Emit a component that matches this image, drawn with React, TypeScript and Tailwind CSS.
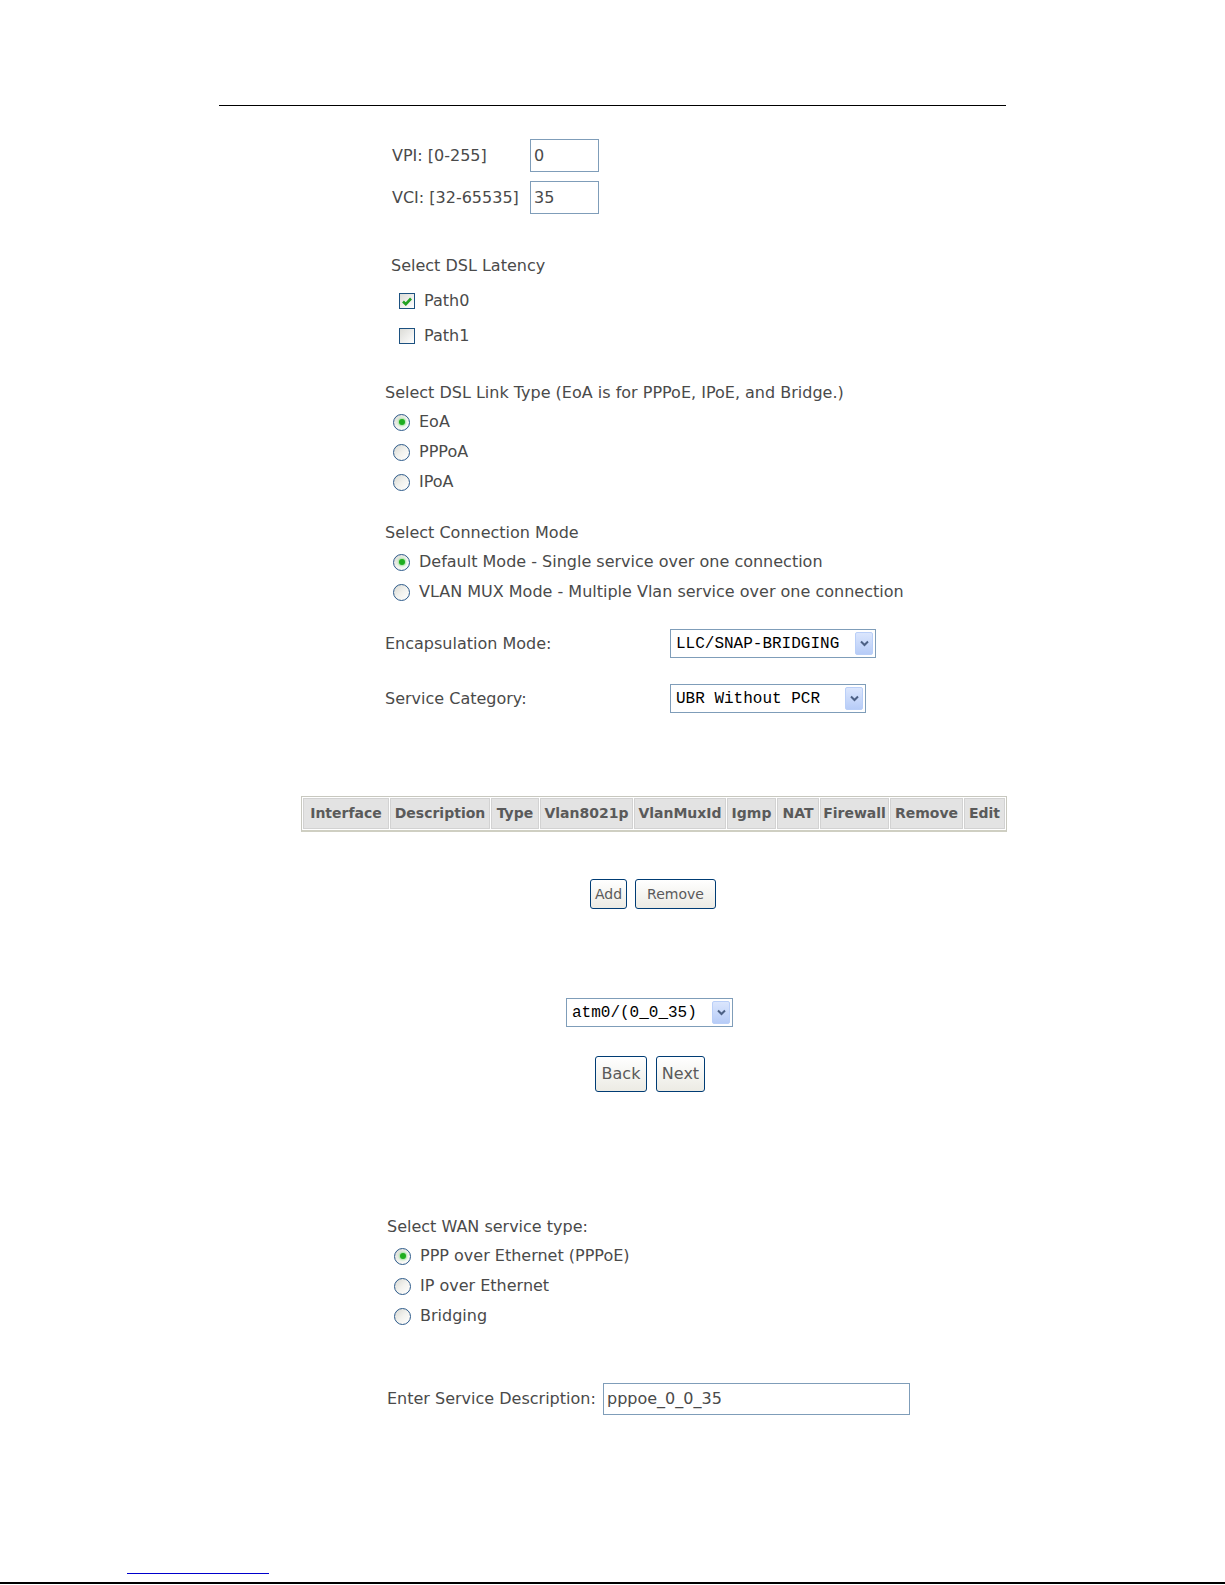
import React from "react";

const font = "font-['DejaVu_Sans',Verdana,sans-serif]";

function Radio({ checked }: { checked?: boolean }) {
  return (
    <span className="w-[17px] h-[17px] shrink-0 rounded-full border-[1.5px] border-[#2c5a8a] bg-linear-to-br from-[#d8d8d2] via-[#f2f2ee] to-white flex items-center justify-center">
      {checked && <span className="w-[6px] h-[6px] rounded-full bg-[#1fae1f] shadow-[0_0_2px_1px_#9ee39e]" />}
    </span>
  );
}

function Checkbox({ checked }: { checked?: boolean }) {
  return (
    <span className="w-[16px] h-[16px] shrink-0 border border-[#1c5180] bg-linear-to-br from-[#dcdcd7] to-white flex items-center justify-center">
      {checked && (
        <svg width="10" height="9" viewBox="0 0 10 9">
          <path d="M1 4.5 L3.8 7.2 L9 1.5" fill="none" stroke="#21a121" strokeWidth="2.6" />
        </svg>
      )}
    </span>
  );
}

function Select({ value, width }: { value: string; width: string }) {
  return (
    <div className={`${width} h-[29px] border border-[#7f9db9] bg-white flex items-center justify-between pl-[5px] pr-[2px]`}>
      <span className="font-['Liberation_Mono',monospace] text-[16px] text-black whitespace-pre">{value}</span>
      <span className="w-[18px] h-[23px] rounded-[2px] border border-[#bacff8] bg-linear-to-b from-[#dbe6fd] to-[#b7ccf7] flex items-center justify-center">
        <svg width="9" height="7" viewBox="0 0 9 7">
          <path d="M1 1.5 L4.5 5 L8 1.5" fill="none" stroke="#4d6185" strokeWidth="2" />
        </svg>
      </span>
    </div>
  );
}

function Button({ label, className }: { label: string; className: string }) {
  return (
    <span className={`${className} border border-[#003c74] rounded-[3px] bg-linear-to-b from-white to-[#ecebe4] text-[#5a5a5a] flex items-center justify-center`}>
      {label}
    </span>
  );
}

function Option({ checked, label, top }: { checked?: boolean; label: string; top: string }) {
  return (
    <div className={`${top} h-[20px] flex items-center gap-[9px]`}>
      <Radio checked={checked} />
      <span>{label}</span>
    </div>
  );
}

const COLUMNS: [string, string][] = [
  ["Interface", "w-[86px]"],
  ["Description", "w-[100px]"],
  ["Type", "w-[48px]"],
  ["Vlan8021p", "w-[93px]"],
  ["VlanMuxId", "w-[92px]"],
  ["Igmp", "w-[49px]"],
  ["NAT", "w-[42px]"],
  ["Firewall", "w-[69px]"],
  ["Remove", "w-[73px]"],
  ["Edit", "w-[41px]"],
];

export default function App() {
  return (
    <div className={`w-[1225px] h-[1585px] bg-white text-[16px] text-[#4a4a4a] ${font} overflow-hidden`}>
      <div className="w-[787px] ml-[219px] pt-[105px]">
        <div className="h-px bg-black" />

        {/* VPI / VCI */}
        <div className="ml-[173px] mt-[33px] h-[33px] flex items-center">
          <span className="w-[138px]">VPI: [0-255]</span>
          <span className="w-[69px] h-[33px] border border-[#7f9db9] flex items-center pl-[3px]">0</span>
        </div>
        <div className="ml-[173px] mt-[9px] h-[33px] flex items-center">
          <span className="w-[138px]">VCI: [32-65535]</span>
          <span className="w-[69px] h-[33px] border border-[#7f9db9] flex items-center pl-[3px]">35</span>
        </div>

        {/* Latency */}
        <div className="ml-[172px] mt-[42px] h-[20px] flex items-center">Select DSL Latency</div>
        <div className="ml-[180px] mt-[15px] h-[20px] flex items-center gap-[9px]">
          <Checkbox checked />
          <span>Path0</span>
        </div>
        <div className="ml-[180px] mt-[15px] h-[20px] flex items-center gap-[9px]">
          <Checkbox />
          <span>Path1</span>
        </div>

        {/* Link type */}
        <div className="ml-[166px] mt-[37px] h-[20px] flex items-center">
          Select DSL Link Type (EoA is for PPPoE, IPoE, and Bridge.)
        </div>
        <div className="ml-[174px]">
          <Option checked label="EoA" top="mt-[9px]" />
          <Option label="PPPoA" top="mt-[10px]" />
          <Option label="IPoA" top="mt-[10px]" />
        </div>

        {/* Connection mode */}
        <div className="ml-[166px] mt-[31px] h-[20px] flex items-center">Select Connection Mode</div>
        <div className="ml-[174px]">
          <Option checked label="Default Mode - Single service over one connection" top="mt-[9px]" />
          <Option label="VLAN MUX Mode - Multiple Vlan service over one connection" top="mt-[10px]" />
        </div>

        {/* Encapsulation / Service category */}
        <div className="ml-[166px] mt-[27px] flex items-center">
          <span className="w-[285px]">Encapsulation Mode:</span>
          <Select value="LLC/SNAP-BRIDGING" width="w-[206px]" />
        </div>
        <div className="ml-[166px] mt-[26px] flex items-center">
          <span className="w-[285px]">Service Category:</span>
          <Select value="UBR Without PCR" width="w-[196px]" />
        </div>

        {/* Table header */}
        <div className="ml-[82px] mt-[83px] w-fit h-[36px] border border-[#c8c8bf] border-b-2 border-b-[#cfcfc2] p-px flex gap-px bg-white">
          {COLUMNS.map(([name, w]) => (
            <div
              key={name}
              className={`${w} h-full shrink-0 bg-[#e3e3e3] border border-[#d2d2d2] flex items-center justify-center font-bold text-[14px] text-[#5a5a5a]`}
            >
              {name}
            </div>
          ))}
        </div>

        {/* Add / Remove */}
        <div className="mt-[47px] flex gap-[8px] ml-[371px] text-[14px]">
          <Button label="Add" className="w-[37px] h-[30px]" />
          <Button label="Remove" className="w-[81px] h-[30px]" />
        </div>

        {/* Interface select */}
        <div className="mt-[89px] ml-[347px]">
          <Select value="atm0/(0_0_35)" width="w-[167px]" />
        </div>

        {/* Back / Next */}
        <div className="mt-[29px] ml-[376px] flex gap-[9px]">
          <Button label="Back" className="w-[52px] h-[36px]" />
          <Button label="Next" className="w-[49px] h-[36px]" />
        </div>

        {/* WAN service type */}
        <div className="ml-[168px] mt-[125px] h-[20px] flex items-center">Select WAN service type:</div>
        <div className="ml-[175px]">
          <Option checked label="PPP over Ethernet (PPPoE)" top="mt-[9px]" />
          <Option label="IP over Ethernet" top="mt-[10px]" />
          <Option label="Bridging" top="mt-[10px]" />
        </div>

        {/* Service description */}
        <div className="ml-[168px] mt-[57px] flex items-center">
          <span className="w-[216px]">Enter Service Description:</span>
          <span className="w-[307px] h-[32px] border border-[#7f9db9] flex items-center pl-[3px]">pppoe_0_0_35</span>
        </div>
      </div>

      {/* footer */}
      <div className="mt-[158px] ml-[127px] w-[142px] h-px bg-[#0000cc]" />
      <div className="mt-[8px] h-[2px] bg-black" />
    </div>
  );
}
